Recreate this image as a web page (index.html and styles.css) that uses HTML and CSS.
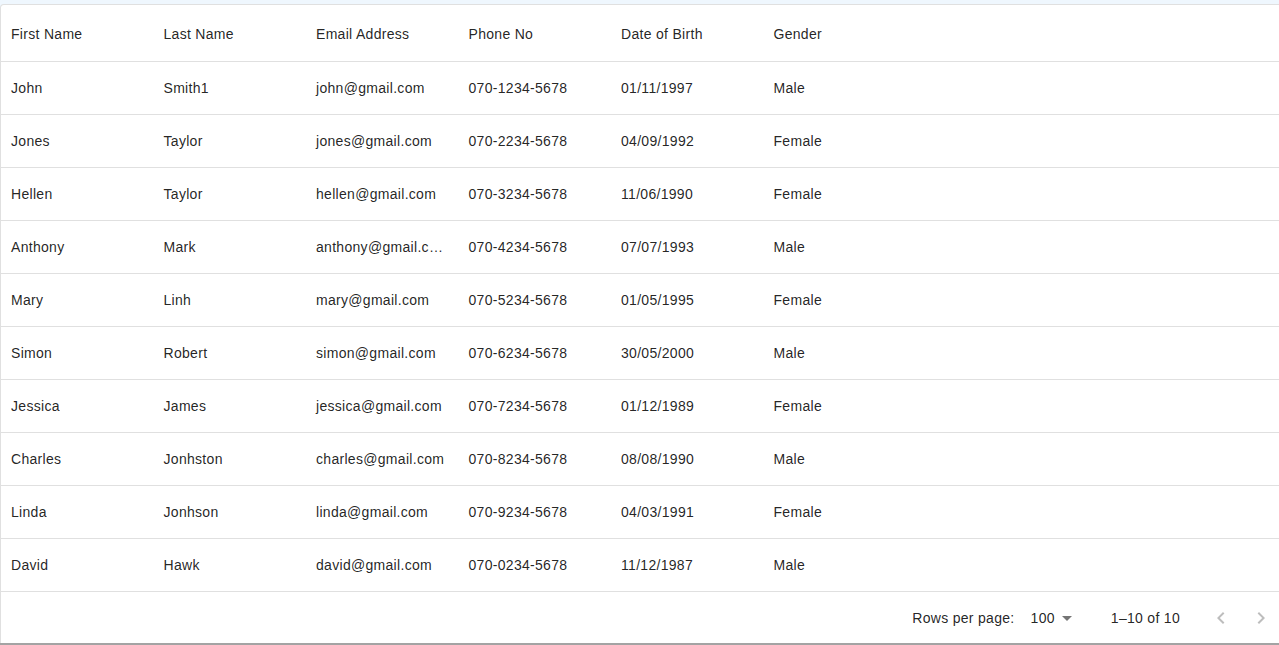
FILE: index.html
```html
<!DOCTYPE html>
<html>
<head>
<meta charset="utf-8">
<link rel="stylesheet" href="styles.css">
</head>
<body>
<div class="page">
  <div class="grid">
    <div class="row head">
      <div class="cell">First Name</div>
      <div class="cell">Last Name</div>
      <div class="cell">Email Address</div>
      <div class="cell">Phone No</div>
      <div class="cell">Date of Birth</div>
      <div class="cell">Gender</div>
    </div>
    <div class="row"><div class="cell">John</div><div class="cell">Smith1</div><div class="cell">john@gmail.com</div><div class="cell">070-1234-5678</div><div class="cell">01/11/1997</div><div class="cell">Male</div></div>
    <div class="row"><div class="cell">Jones</div><div class="cell">Taylor</div><div class="cell">jones@gmail.com</div><div class="cell">070-2234-5678</div><div class="cell">04/09/1992</div><div class="cell">Female</div></div>
    <div class="row"><div class="cell">Hellen</div><div class="cell">Taylor</div><div class="cell">hellen@gmail.com</div><div class="cell">070-3234-5678</div><div class="cell">11/06/1990</div><div class="cell">Female</div></div>
    <div class="row"><div class="cell">Anthony</div><div class="cell">Mark</div><div class="cell">anthony@gmail.com</div><div class="cell">070-4234-5678</div><div class="cell">07/07/1993</div><div class="cell">Male</div></div>
    <div class="row"><div class="cell">Mary</div><div class="cell">Linh</div><div class="cell">mary@gmail.com</div><div class="cell">070-5234-5678</div><div class="cell">01/05/1995</div><div class="cell">Female</div></div>
    <div class="row"><div class="cell">Simon</div><div class="cell">Robert</div><div class="cell">simon@gmail.com</div><div class="cell">070-6234-5678</div><div class="cell">30/05/2000</div><div class="cell">Male</div></div>
    <div class="row"><div class="cell">Jessica</div><div class="cell">James</div><div class="cell">jessica@gmail.com</div><div class="cell">070-7234-5678</div><div class="cell">01/12/1989</div><div class="cell">Female</div></div>
    <div class="row"><div class="cell">Charles</div><div class="cell">Jonhston</div><div class="cell">charles@gmail.com</div><div class="cell">070-8234-5678</div><div class="cell">08/08/1990</div><div class="cell">Male</div></div>
    <div class="row"><div class="cell">Linda</div><div class="cell">Jonhson</div><div class="cell">linda@gmail.com</div><div class="cell">070-9234-5678</div><div class="cell">04/03/1991</div><div class="cell">Female</div></div>
    <div class="row"><div class="cell">David</div><div class="cell">Hawk</div><div class="cell">david@gmail.com</div><div class="cell">070-0234-5678</div><div class="cell">11/12/1987</div><div class="cell">Male</div></div>
    <div class="footer">
      <span class="label">Rows per page:</span>
      <span class="select">100
        <svg class="caret" width="24" height="24" viewBox="0 0 24 24"><path d="M7 10l5 5 5-5z" fill="rgba(0,0,0,0.54)"/></svg>
      </span>
      <span class="count">1–10 of 10</span>
      <span class="actions">
        <span class="btn"><svg width="24" height="24" viewBox="0 0 24 24"><path d="M15.41 7.41 14 6l-6 6 6 6 1.41-1.41L10.83 12z" fill="rgba(0,0,0,0.26)"/></svg></span>
        <span class="btn"><svg width="24" height="24" viewBox="0 0 24 24"><path d="M10 6 8.59 7.41 13.17 12l-4.58 4.59L10 18l6-6z" fill="rgba(0,0,0,0.26)"/></svg></span>
      </span>
    </div>
  </div>
  <div class="baseline"></div>
</div>
</body>
</html>
```
FILE: styles.css
```css
html, body {
  margin: 0;
  padding: 0;
}
body {
  background: #eff7fe;
  font-family: "Liberation Sans", Arial, sans-serif;
  font-size: 14px;
  letter-spacing: 0.3px;
  color: rgba(0, 0, 0, 0.87);
  overflow: hidden;
  width: 1279px;
  height: 645px;
}
.page {
  display: flex;
  flex-direction: column;
  padding-top: 4px;
  height: 641px;
  width: 1279px;
  overflow: hidden;
}
.grid {
  width: 1290px;
  height: 639px;
  flex: none;
  box-sizing: border-box;
  border: 1px solid #e0e0e0;
  border-bottom: none;
  border-radius: 4px 4px 0 0;
  background: #fff;
  display: flex;
  flex-direction: column;
}
.row {
  display: flex;
  height: 52px;
  border-bottom: 1px solid #e0e0e0;
  flex: none;
}
.row.head {
  height: 56px;
}
.cell {
  width: 152.5px;
  flex: none;
  box-sizing: border-box;
  padding: 0 10px;
  display: block;
  overflow: hidden;
  white-space: nowrap;
  text-overflow: ellipsis;
  line-height: 52px;
}
.row.head .cell {
  line-height: 56px;
  padding-top: 1px;
}
.footer {
  flex: 1;
  display: flex;
  align-items: center;
  justify-content: flex-end;
  padding-right: 8px;
  font-size: 14px;
}
.label {
  margin-right: 16px;
}
.select {
  display: flex;
  align-items: center;
  margin-right: 32px;
}
.count {
  margin-right: 21px;
}
.actions {
  display: flex;
}
.btn {
  width: 40px;
  height: 40px;
  display: flex;
  align-items: center;
  justify-content: center;
}
.baseline {
  height: 2px;
  background: #a3a3a3;
  flex: none;
}
```
